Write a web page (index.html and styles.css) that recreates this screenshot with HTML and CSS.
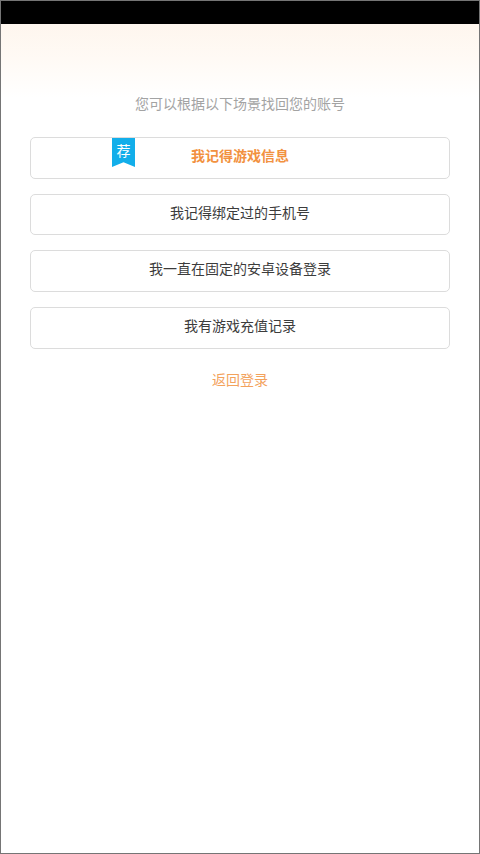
FILE: index.html
```html
<!DOCTYPE html>
<html lang="zh-CN">

<head>
    <meta charset="UTF-8">
    <meta name="viewport" content="width=device-width, initial-scale=1.0">
    <title>找回账号</title>
    <link rel="stylesheet" href="styles.css">
</head>

<body>
    <div class="tela">
        <div class="barra"></div>
        <div class="conteudo">
            <div class="titulo">您可以根据以下场景找回您的账号</div>
            <div class="lista">
                <div class="opcao destaque">
                    <span class="selo">荐</span>
                    我记得游戏信息
                </div>
                <div class="opcao">我记得绑定过的手机号</div>
                <div class="opcao">我一直在固定的安卓设备登录</div>
                <div class="opcao">我有游戏充值记录</div>
            </div>
            <div class="voltar">返回登录</div>
        </div>
    </div>
</body>

</html>
```

FILE: styles.css
```css
* {
    box-sizing: border-box;
}

html,
body {
    margin: 0;
    padding: 0;
    background-color: white;
}

.tela {
    width: 480px;
    height: 854px;
    border: 1px solid #757575;
    font-family: "Noto Sans CJK SC", "Liberation Sans", sans-serif;
    font-size: 14px;
    overflow: hidden;
}

.barra {
    height: 23px;
    background-color: black;
}

.conteudo {
    height: 829px;
    padding: 69px 29px 0;
    background: linear-gradient(to bottom, #fef6ee 0, #fffaf5 35px, white 74px);
}

.titulo {
    height: 20px;
    line-height: 20px;
    text-align: center;
    color: #a3a3a3;
}

.lista {
    margin-top: 24px;
    display: flex;
    flex-direction: column;
    gap: 15.2px;
}

.opcao {
    position: relative;
    height: 41.5px;
    line-height: 35px;
    text-align: center;
    color: #3c3c3c;
    background-color: white;
    border: 1px solid #dcdcdc;
    border-radius: 5px;
}

.destaque {
    color: #f29140;
    font-weight: bold;
}

.selo {
    position: absolute;
    left: 81px;
    top: 0;
    width: 23px;
    height: 29px;
    line-height: 25px;
    text-align: center;
    color: white;
    font-weight: normal;
    background-color: #12aeea;
    clip-path: polygon(0 0, 100% 0, 100% 100%, 50% 84%, 0 100%);
}

.voltar {
    margin-top: 20px;
    height: 20px;
    line-height: 20px;
    text-align: center;
    color: #f3a25c;
}
```
